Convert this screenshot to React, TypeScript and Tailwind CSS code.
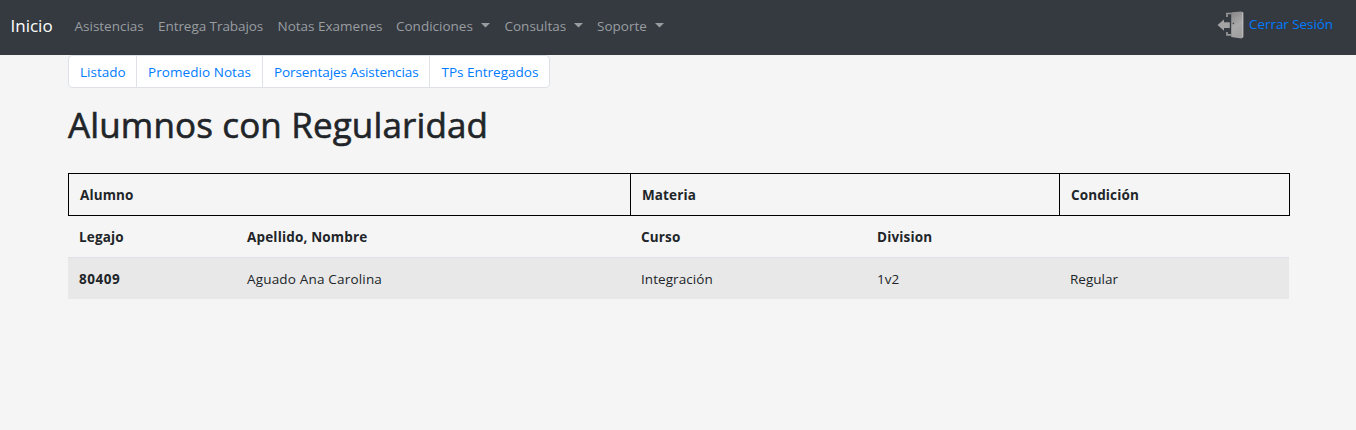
import type { ReactNode } from 'react';

function Caret() {
  return (
    <svg className="ml-[8px] mt-[-2px] h-[5px] w-[9px] shrink-0" viewBox="0 0 9 5">
      <path d="M0 0H9L4.5 4.5Z" fill="currentColor" />
    </svg>
  );
}

function NavItem({ className, caret, children }: { className: string; caret?: boolean; children: ReactNode }) {
  return (
    <a href="#" className={`flex items-center whitespace-nowrap ${className}`}>
      {children}
      {caret && <Caret />}
    </a>
  );
}

function DoorIcon() {
  return (
    <svg className="h-[28px] w-[28px]" viewBox="0 0 28 28">
      <defs>
        <linearGradient id="door" x1="0" y1="0" x2="0.3" y2="1">
          <stop offset="0" stopColor="#858585" />
          <stop offset="0.6" stopColor="#aaaaaa" />
          <stop offset="1" stopColor="#a0a0a0" />
        </linearGradient>
      </defs>
      <path d="M14 2.5H10V6M10 21V23.8H14" fill="none" stroke="#989898" strokeWidth="1.7" />
      <path d="M14.2 1.2L24.5 0.4L26.4 1.5V26L24.5 27.6L14.2 26Z" fill="url(#door)" />
      <path d="M25.6 1.5V26.3" stroke="#c0c0c0" strokeWidth="0.9" />
      <path d="M0.5 14L7 8.5V11.3H12.8V17H7V19.8Z" fill="#a3a3a3" />
      <circle cx="16.4" cy="12.4" r="0.8" fill="#484848" />
    </svg>
  );
}

export default function App() {
  return (
    <div className="min-h-[430px] bg-[#f5f5f5] font-['Open_Sans','Noto_Sans',sans-serif] text-[13.5px] leading-[21px] text-[#212529]">
      <nav className="flex h-[55px] items-start bg-[#343a40] text-[#9a9da0]">
        <a href="#" className="mt-[12px] ml-[10.5px] w-[64px] text-[17px] leading-[27px] text-white">Inicio</a>
        <div className="mt-[16px] flex">
          <NavItem className="w-[83.5px]">Asistencias</NavItem>
          <NavItem className="w-[119.5px] tracking-[-0.06px]">Entrega Trabajos</NavItem>
          <NavItem className="w-[118.5px]">Notas Examenes</NavItem>
          <NavItem className="w-[108.5px]" caret>Condiciones</NavItem>
          <NavItem className="w-[92.5px]" caret>Consultas</NavItem>
          <NavItem className="w-[80px]" caret>Soporte</NavItem>
        </div>
        <a href="#" className="mt-[11px] mr-[22px] ml-auto flex gap-[4px] whitespace-nowrap text-[#007bff]">
          <DoorIcon />
          <span className="mt-[3px] w-[85px] tracking-[-0.06px]">Cerrar Sesión</span>
        </a>
      </nav>
      <main className="ml-[68px] w-[1222px]">
        <div className="flex h-[33px] w-[482px] divide-x divide-[#dee2e6] rounded-[4px] border border-[#dee2e6] bg-white leading-[32px] whitespace-nowrap text-[#007bff]">
          <a href="#" className="w-[68px] pl-[11px]">Listado</a>
          <a href="#" className="w-[126px] pl-[11px] tracking-[0.06px]">Promedio Notas</a>
          <a href="#" className="w-[167px] pl-[11px] tracking-[-0.09px]">Porsentajes Asistencias</a>
          <a href="#" className="w-[119px] pl-[11.5px]">TPs Entregados</a>
        </div>
        <h1 className="mt-[16px] h-[69px] text-[35px] leading-[41px] font-medium tracking-[0.14px] whitespace-nowrap [-webkit-text-stroke:0.6px_#212529]">Alumnos con Regularidad</h1>
        <div className="grid h-[43px] grid-cols-[562px_429px_1fr] grid-rows-[41px] border border-black leading-[43px] font-bold tracking-[0.12px]">
          <div className="border-r border-black pl-[11px]">Alumno</div>
          <div className="border-r border-black pl-[11px]">Materia</div>
          <div className="pl-[11px]">Condición</div>
        </div>
        <div className="grid h-[41px] w-[1221px] grid-cols-[168px_394px_236px_193px_1fr] leading-[43px] font-bold tracking-[0.17px]">
          <div className="pl-[11px]">Legajo</div>
          <div className="pl-[11px]">Apellido, Nombre</div>
          <div className="pl-[11px]">Curso</div>
          <div className="pl-[11px]">Division</div>
          <div />
        </div>
        <div className="grid h-[42px] w-[1221px] grid-cols-[168px_394px_236px_193px_1fr] border-t border-[#dee2e6] bg-[#e8e8e8] leading-[42px]">
          <div className="pl-[11px] font-bold tracking-[0.5px]">80409</div>
          <div className="pl-[11px] tracking-[0.18px]">Aguado Ana Carolina</div>
          <div className="pl-[11px] tracking-[0.06px]">Integración</div>
          <div className="pl-[11px]">1v2</div>
          <div className="pl-[11px]">Regular</div>
        </div>
      </main>
    </div>
  );
}
